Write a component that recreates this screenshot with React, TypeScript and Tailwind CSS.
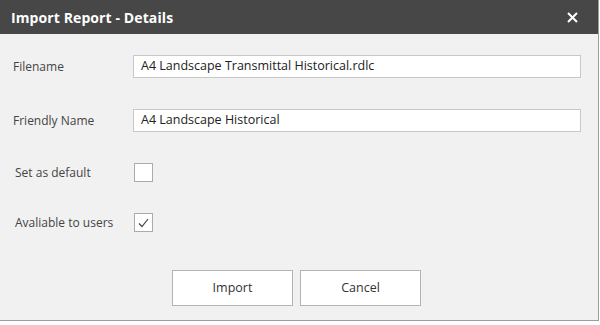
import React from "react";

// ═══════════════ Field rows ═══════════════

const FONT = "font-['Segoe_UI','Open_Sans','Liberation_Sans',sans-serif]";

function TextRow({ label, value }: { label: string; value: string }) {
  return (
    <div className="flex items-center h-[23px]">
      <div className="w-[120px] text-[12px] text-[#444]">{label}</div>
      <div className="flex-1 h-[23px] bg-white border border-[#c8c8c8] flex items-center px-[7px] text-[12.5px] text-[#222]">
        {value}
      </div>
    </div>
  );
}

function CheckRow({ label, checked }: { label: string; checked: boolean }) {
  return (
    <div className="flex items-center h-[19px] pl-[2px]">
      <div className="w-[119px] text-[12px] text-[#444]">{label}</div>
      <div className="w-[19px] h-[19px] bg-white border border-[#ababab] flex items-center justify-center">
        {checked && (
          <svg width="11" height="10" viewBox="0 0 11 10" fill="none">
            <path d="M1 5.5 L4 8.5 L10 1" stroke="#444" strokeWidth="1.2" />
          </svg>
        )}
      </div>
    </div>
  );
}

// ═══════════════ Dialog ═══════════════

export default function App() {
  return (
    <div className={`w-[600px] h-[325px] bg-white ${FONT}`}>
      <div className="w-[599px] h-[321px] bg-[#f1f1f1] border-r border-b border-[#9c9c9c] flex flex-col">
        {/* Title bar */}
        <div className="h-[34px] bg-[#474747] flex items-center justify-between pl-[11px] pr-[20px]">
          <span className="text-white font-bold text-[14px] tracking-[0.1px]">
            Import Report - Details
          </span>
          <svg width="11" height="11" viewBox="0 0 11 11">
            <path d="M1 1 L10 10 M10 1 L1 10" stroke="#fff" strokeWidth="2" />
          </svg>
        </div>

        {/* Body */}
        <div className="flex flex-col pt-[21px] pl-[13px] pr-[17px]">
          <TextRow label="Filename" value="A4 Landscape Transmittal Historical.rdlc" />
          <div className="mt-[31px]">
            <TextRow label="Friendly Name" value="A4 Landscape Historical" />
          </div>
          <div className="mt-[31px]">
            <CheckRow label="Set as default" checked={false} />
          </div>
          <div className="mt-[31px]">
            <CheckRow label="Avaliable to users" checked />
          </div>
          <div className="mt-[38px] flex gap-[7px] pl-[159px]">
            <button
              type="button"
              className="w-[121px] h-[36px] bg-white border border-[#b4b4b4] text-[12.5px] text-[#333]"
            >
              Import
            </button>
            <button
              type="button"
              className="w-[121px] h-[36px] bg-white border border-[#b4b4b4] text-[12.5px] text-[#333]"
            >
              Cancel
            </button>
          </div>
        </div>
      </div>
    </div>
  );
}
